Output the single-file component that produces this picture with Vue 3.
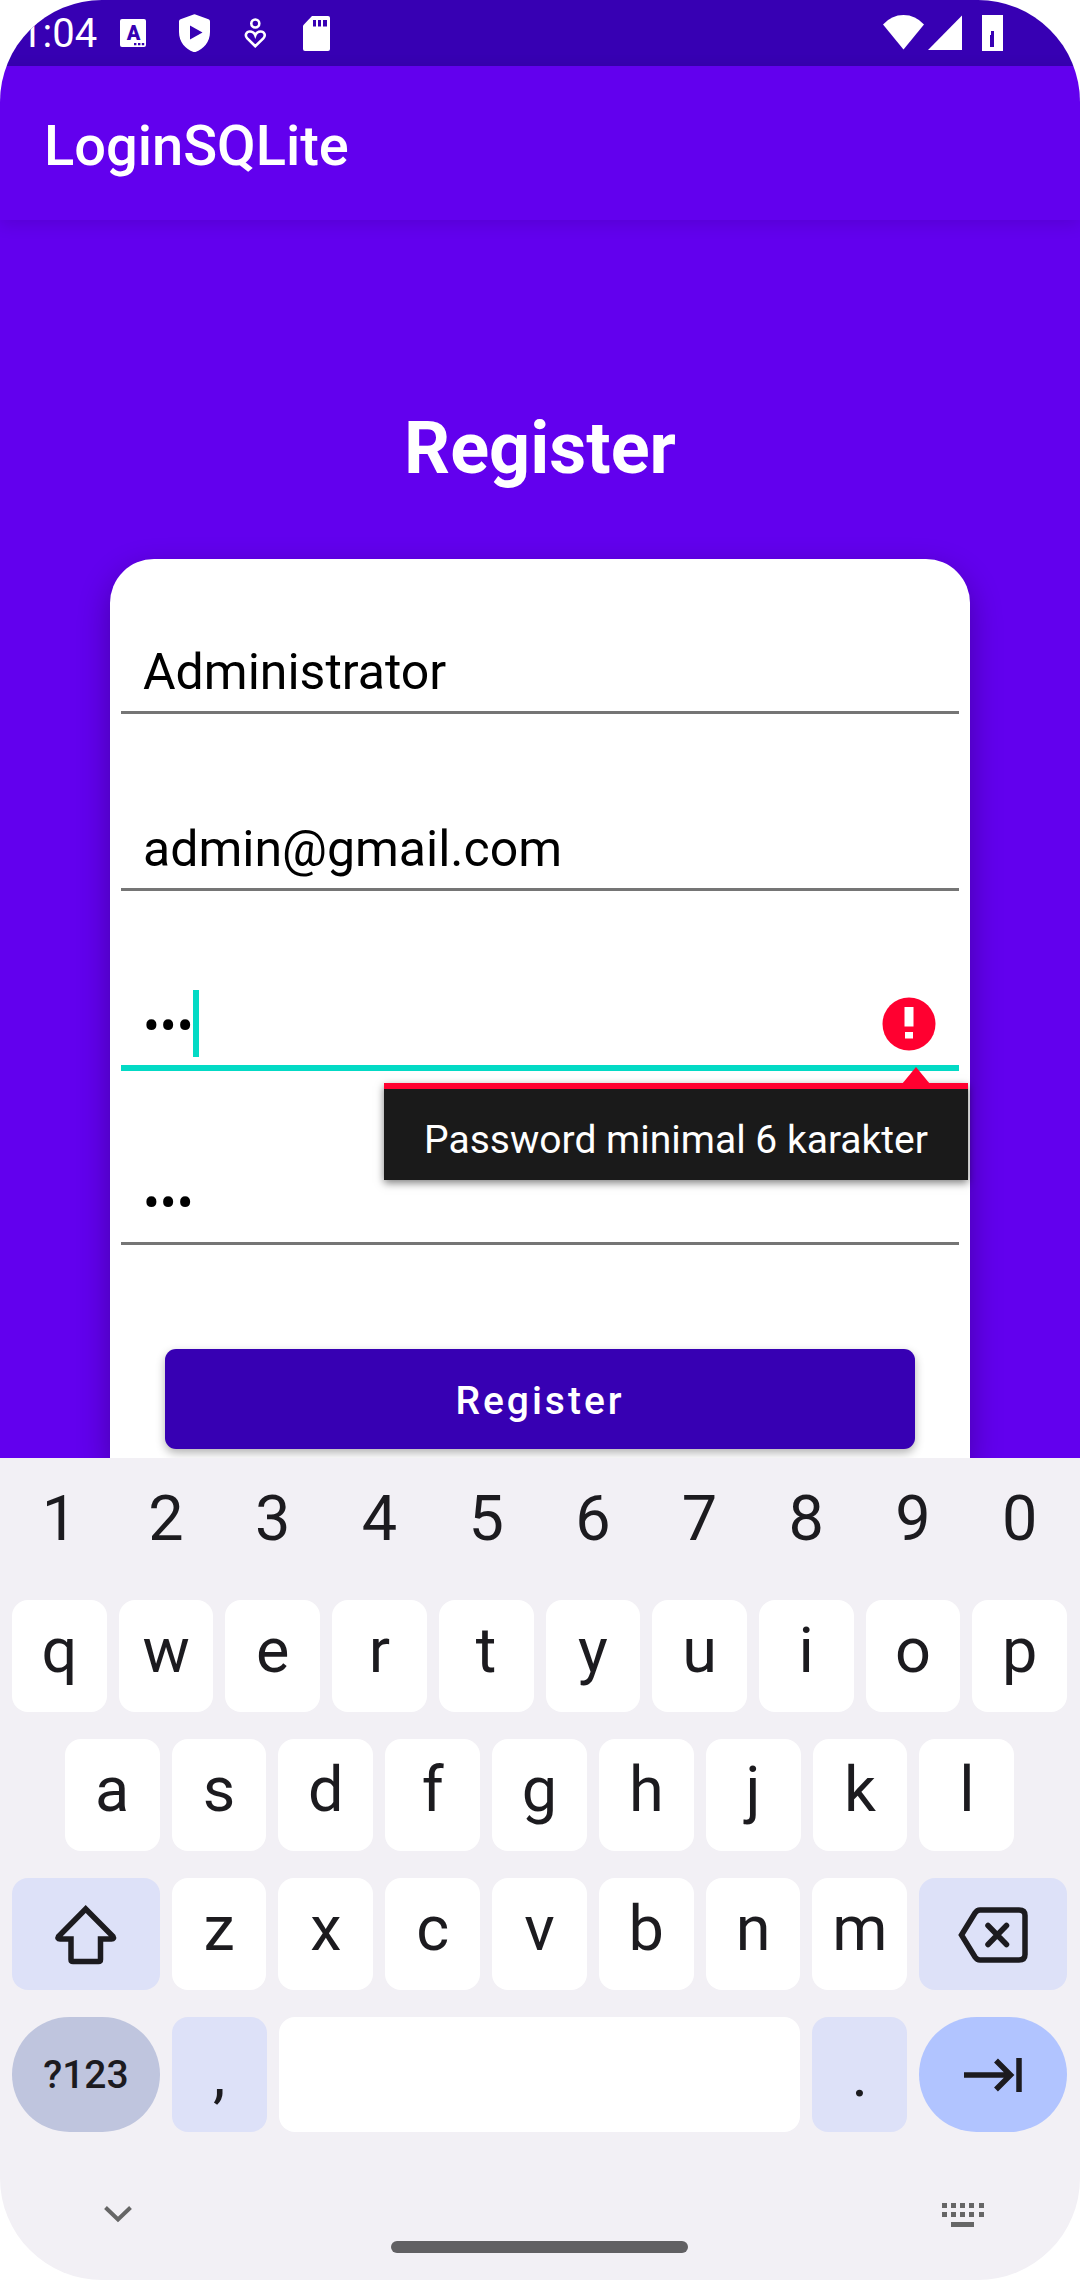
<script setup>
import { ref } from 'vue'

const name = ref('Administrator')
const email = ref('admin@gmail.com')
const password = ref('123')
const confirm = ref('123')

const numbers = [...'1234567890']
const topRow = [...'qwertyuiop']
const homeRow = [...'asdfghjkl']
const bottomRow = [...'zxcvbnm']
const dotColumns = [0, 9, 18, 27, 37]
</script>

<template>
  <div class="device">
    <div class="status">
      <div class="status-left">
        <span class="time">1:04</span>
        <svg class="status-icon" viewBox="0 0 38 38" aria-hidden="true">
          <rect x="6" y="5" width="26" height="28" rx="2" fill="#fff" />
          <text x="19.5" y="26" class="badge-letter" text-anchor="middle">A</text>
          <path d="M20 29h2.4v2.2H20zM24 29h2.4v2.2H24zM27.8 29h2.4v2.2h-2.4z" fill="#3700b3" />
        </svg>
        <svg class="status-icon" viewBox="0 0 38 38" aria-hidden="true">
          <path d="M18.6.4q.9-.5 1.8 0L33.5 5.2Q35 5.8 35 7.5V18c0 10-6.5 17-14.5 20q-1 .4-2 0C10.5 35 4 28 4 18V7.5q0-1.7 1.5-2.3z" fill="#fff" />
          <path d="M15 11.5v14L27.500 18.500z" fill="#3700b3" />
        </svg>
        <svg class="status-icon" viewBox="0 0 38 38" fill="none" stroke="#fff" stroke-width="2.6" aria-hidden="true">
          <circle cx="19.3" cy="9.5" r="4" />
          <path d="M19.3 32.2l-8-7.8c-3-3.4-.8-6.9 2.6-6.9 2.8 0 4.6 1.7 5.4 3.8.8-2.1 2.6-3.8 5.4-3.8 3.4 0 5.600 3.500 2.600 6.900z" />
        </svg>
        <svg class="status-icon" viewBox="0 0 38 38" aria-hidden="true">
          <path d="M15 2h16q2 0 2 2v31q0 2-2 2H8q-2 0-2-2V11.5z" fill="#fff" />
          <path d="M16 6h3v6.5h-3zM21 6h3v6.5h-3zM26 6h4v6.5h-4z" fill="#3700b3" />
        </svg>
      </div>
      <div class="status-right">
        <svg width="41" height="36" viewBox="0 0 41 36" aria-hidden="true">
          <path d="M0 9.5Q8.5 0 20.5 0T41 9.5L20.5 34.5z" fill="#fff" />
        </svg>
        <svg width="34" height="36" viewBox="0 0 34 36" aria-hidden="true">
          <path d="M34 .5V35H0z" fill="#fff" />
        </svg>
        <svg class="battery" width="21" height="36" viewBox="0 0 21 36" aria-hidden="true">
          <path d="M0 0h21v36H0z" fill="#fff" />
          <path d="M9 16h3v16H8V20h1z" fill="#3700b3" />
        </svg>
      </div>
    </div>

    <header class="appbar">
      <span class="app-title">LoginSQLite</span>
    </header>

    <main class="page">
      <h1 class="heading">Register</h1>
      <form class="card" @submit.prevent>
        <div class="field">
          <input v-model="name" type="text" aria-label="Username" />
        </div>
        <div class="field">
          <input v-model="email" type="text" inputmode="email" aria-label="Email" />
        </div>
        <div class="field active">
          <input v-model="password" type="password" aria-label="Password" aria-describedby="password-error" />
          <span class="caret"></span>
          <svg class="error-icon" width="54" height="54" viewBox="0 0 54 54" aria-hidden="true">
            <circle cx="27" cy="27" r="26.5" fill="#ff0030" />
            <path d="M22.5 10h9v19.5h-9zM23 35h8v6.5h-8z" fill="#fff" />
          </svg>
          <div id="password-error" class="error-popup" role="alert">
            <svg class="arrow" width="28" height="17" viewBox="0 0 28 17" aria-hidden="true">
              <path d="M14 0l14 17H0z" fill="#ff0030" />
            </svg>
            Password minimal 6 karakter
          </div>
        </div>
        <div class="field">
          <input v-model="confirm" type="password" aria-label="Confirm password" />
        </div>
        <button class="submit" type="submit">Register</button>
      </form>
    </main>

    <section class="keyboard" aria-label="Keyboard">
      <div class="row">
        <button v-for="k in numbers" :key="k" type="button" class="key number">{{ k }}</button>
      </div>
      <div class="row">
        <button v-for="k in topRow" :key="k" type="button" class="key">{{ k }}</button>
      </div>
      <div class="row inset">
        <button v-for="k in homeRow" :key="k" type="button" class="key">{{ k }}</button>
      </div>
      <div class="row">
        <button type="button" class="key wide tinted icon" aria-label="Shift">
          <svg width="64" height="60" viewBox="0 0 64 60" fill="none" stroke="#1c1b1f" stroke-width="5.5">
            <path d="M31.7 4L59 31.5Q60.5 34 57.5 34H46.5v20.5q0 2-2 2H19q-2 0-2-2V34H6q-3 0-1.5-2.5z" />
          </svg>
        </button>
        <button v-for="k in bottomRow" :key="k" type="button" class="key">{{ k }}</button>
        <button type="button" class="key wide tinted icon" aria-label="Backspace">
          <svg width="70" height="56" viewBox="0 0 70 56" fill="none" stroke="#1c1b1f" stroke-width="5.5">
            <path d="M3.5 28L17 6q2-3 5-3h39q6 0 6 5.5v39q0 5.5-6 5.5H22q-3 0-5-3z" />
            <path d="M30 18.5L48.5 37.5M48.5 18.5L30 37.5" stroke-linecap="round" />
          </svg>
        </button>
      </div>
      <div class="row last">
        <button type="button" class="key wide symbols">?123</button>
        <button type="button" class="key tinted mark">,</button>
        <button type="button" class="key space" aria-label="Space"></button>
        <button type="button" class="key tinted mark">.</button>
        <button type="button" class="key wide next icon" aria-label="Next">
          <svg width="58" height="34" viewBox="0 0 58 34" fill="none" stroke="#1c1b1f" stroke-width="5.5">
            <path d="M0 17h46M32 2.5L46.5 17 32 31.5M55 0v34" />
          </svg>
        </button>
      </div>
      <div class="nav">
        <button type="button" class="nav-button" aria-label="Hide keyboard">
          <svg width="28" height="24" viewBox="0 0 28 24" fill="none" stroke="#666" stroke-width="4">
            <path d="M1.5 4.5L14 16.5 26.5 4.5" />
          </svg>
        </button>
        <button type="button" class="nav-button" aria-label="Switch keyboard">
          <svg width="42" height="24" viewBox="0 0 42 24" fill="#666">
            <template v-for="x in dotColumns" :key="x">
              <rect :x="x" y="0" width="5" height="5" />
              <rect :x="x" y="9" width="5" height="5" />
            </template>
            <rect x="9" y="19" width="23" height="5" />
          </svg>
        </button>
      </div>
      <div class="home-bar"></div>
    </section>
  </div>
</template>

<style>
body {
  background: #fff;
}
</style>

<style scoped>
.device {
  display: flex;
  flex-direction: column;
  min-height: 100vh;
  border-radius: 102px;
  overflow: hidden;
  font-family: Roboto, "Noto Sans", sans-serif;
}

button,
input {
  margin: 0;
  border: 0;
  padding: 0;
  outline: none;
  font-family: inherit;
}

svg {
  display: block;
}

.status {
  display: flex;
  justify-content: space-between;
  align-items: center;
  height: 66px;
  padding: 0 77px 0 20px;
  background: #3700b3;
  color: #fff;
}

.status-left {
  display: flex;
  align-items: center;
  gap: 23px;
}

.status-icon {
  width: 38px;
  height: 38px;
}

.badge-letter {
  font-size: 20px;
  font-weight: 900;
  fill: #3700b3;
}

.time {
  margin-right: -6px;
  padding-top: 2px;
  font-size: 40px;
  line-height: 48px;
}

.status-right {
  display: flex;
  gap: 4px;
}

.battery {
  margin-left: 16px;
}

.appbar {
  position: relative;
  z-index: 1;
  display: flex;
  align-items: center;
  height: 154px;
  padding: 0 44px;
  background: #6200ee;
  box-shadow: 0 4px 16px rgba(0, 0, 0, 0.12);
  color: #fff;
}

.app-title {
  padding-top: 6px;
  font-size: 56px;
  line-height: 64px;
  font-weight: 500;
}

.page {
  flex: 1;
  display: flex;
  flex-direction: column;
  padding: 181px 110px 0;
  background: #6200ee;
}

.heading {
  margin: 0 0 62px;
  font-size: 72px;
  line-height: 96px;
  font-weight: 700;
  text-align: center;
  color: #fff;
}

.card {
  flex: 1;
  display: flex;
  flex-direction: column;
  gap: 82px;
  padding: 60px 11px 9px;
  border-radius: 44px 44px 0 0;
  background: #fff;
  box-shadow: 0 12px 32px rgba(0, 0, 0, 0.3);
}

.field {
  position: relative;
  display: flex;
}

.field input {
  box-sizing: border-box;
  width: 100%;
  height: 95px;
  padding: 14px 22px 0;
  border-bottom: 3px solid #757575;
  background: transparent;
  font-size: 50px;
  color: #000;
}

.field.active {
  z-index: 1;
}

.field.active input {
  border-bottom-color: #03dac5;
  box-shadow: 0 3px #03dac5;
}

.caret {
  position: absolute;
  left: 72px;
  top: 17px;
  width: 6px;
  height: 67px;
  background: #03dac5;
}

.error-icon {
  position: absolute;
  right: 23px;
  top: 24px;
}

.error-popup {
  position: absolute;
  top: 110px;
  right: -9px;
  padding: 28px 40px 17px;
  border-top: 6px solid #ff0030;
  background: #1a1a1a;
  box-shadow: 0 3px 8px rgba(0, 0, 0, 0.5);
  font-size: 39px;
  line-height: 46px;
  white-space: nowrap;
  color: #fff;
}

.arrow {
  position: absolute;
  right: 38px;
  top: -22px;
}

.submit {
  height: 100px;
  margin: 22px 44px 0;
  padding-top: 3px;
  border-radius: 11px;
  background: #3700b3;
  box-shadow: 0 4px 10px rgba(0, 0, 0, 0.3);
  font-size: 39px;
  font-weight: 500;
  letter-spacing: 3px;
  color: #fff;
}

.keyboard {
  position: relative;
  z-index: 1;
  display: flex;
  flex-direction: column;
  gap: 27px;
  padding: 3px 13px 27px 12px;
  background: #f2f0f5;
}

.row {
  display: flex;
  gap: 12px;
  height: 112px;
}

.row.inset {
  padding: 0 5%;
}

.row.last {
  height: 115px;
}

.key {
  flex: 95 1 0;
  padding-bottom: 10px;
  border-radius: 16px;
  background: #fff;
  font-size: 63px;
  line-height: 72px;
  color: #1c1b1f;
}

.key.number {
  padding: 4px 0 0;
  background: transparent;
}

.key.wide {
  flex-grow: 148;
}

.key.space {
  flex-grow: 522;
}

.key.tinted {
  background: #dde1f8;
}

.key.icon {
  display: flex;
  align-items: center;
  justify-content: center;
  padding: 2px 0 0;
}

.key.mark {
  padding: 0;
}

.key.symbols {
  padding: 0;
  border-radius: 58px;
  background: #bfc5de;
  font-size: 39px;
  font-weight: 500;
}

.key.next {
  padding: 0;
  border-radius: 58px;
  background: #b1c4ff;
}

.nav {
  display: flex;
  justify-content: space-between;
  height: 24px;
  margin-top: 44px;
  padding: 0 83px 0 92px;
}

.nav-button {
  background: transparent;
}

.home-bar {
  align-self: center;
  width: 297px;
  height: 12px;
  margin-top: -13px;
  border-radius: 6px;
  background: #616063;
}
</style>
